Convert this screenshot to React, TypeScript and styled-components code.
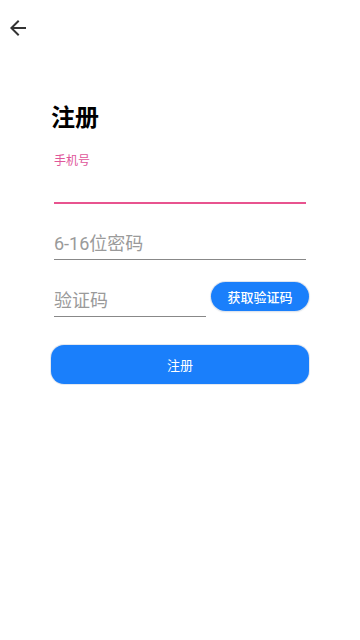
import styled, { createGlobalStyle } from "styled-components";
import { MdArrowBack } from "react-icons/md";

const GlobalStyle = createGlobalStyle`
  html, body {
    margin: 0;
    padding: 0;
    background: #fff;
  }
  body {
    font-family: Roboto, "Noto Sans CJK SC", "Noto Sans", sans-serif;
    -webkit-font-smoothing: antialiased;
  }
  * {
    box-sizing: border-box;
  }
`;

const App = () => {
  return (
    <Page>
      <GlobalStyle />
      <Header>
        <BackButton aria-label="返回">
          <MdArrowBack size={24} />
        </BackButton>
      </Header>
      <Form>
        <Title>注册</Title>
        <PhoneField>
          <FloatLabel>手机号</FloatLabel>
          <PhoneInput type="tel" />
        </PhoneField>
        <TextInput type="password" placeholder="6-16位密码" />
        <CodeRow>
          <TextInput placeholder="验证码" $width={152} $gap={0} />
          <CodeButton type="button">获取验证码</CodeButton>
        </CodeRow>
        <SubmitButton type="button">注册</SubmitButton>
      </Form>
    </Page>
  );
};

export default App;

const Page = styled.div`
  width: 360px;
  min-height: 640px;
  background: #fff;
`;

const Header = styled.div`
  height: 56px;
  display: flex;
  align-items: center;
  padding-left: 6px;
`;

const BackButton = styled.button`
  display: flex;
  padding: 0;
  border: none;
  background: none;
  color: #333;
  cursor: pointer;
`;

const Form = styled.div`
  display: flex;
  flex-direction: column;
  margin: 0 51px;
`;

const Title = styled.h1`
  margin: 46px 0 0;
  font-size: 24px;
  line-height: 32px;
  font-weight: 700;
  color: #000;
`;

const PhoneField = styled.label`
  display: flex;
  flex-direction: column;
  margin: 19px 3px 0;
  border-bottom: 2px solid #e8538f;
`;

const FloatLabel = styled.span`
  font-size: 12px;
  line-height: 16px;
  color: #e0569a;
`;

const PhoneInput = styled.input`
  height: 33px;
  border: none;
  outline: none;
  padding: 0;
  font-size: 18px;
  font-family: inherit;
  background: transparent;
`;

const TextInput = styled.input<{ $width?: number; $gap?: number }>`
  width: ${(p) => (p.$width ? `${p.$width}px` : "auto")};
  height: 33px;
  margin: ${(p) => (p.$gap ?? 23)}px 3px 0;
  padding: 0;
  border: none;
  border-bottom: 1px solid #888;
  outline: none;
  font-size: 18px;
  font-family: inherit;
  color: #333;
  background: transparent;

  &::placeholder {
    color: #9a9a9a;
  }
`;

const CodeRow = styled.div`
  display: flex;
  align-items: flex-start;
  justify-content: space-between;
  margin-top: 24px;
`;

const CodeButton = styled.button`
  width: 98px;
  height: 29px;
  margin-top: -2px;
  padding: 0;
  border: none;
  border-radius: 15px;
  background: #1a7ffb;
  color: #fff;
  font-size: 13px;
  font-weight: 500;
  font-family: inherit;
  box-shadow: 0 0 0 1px #dfe5ee, 0 1px 2px rgba(0, 0, 0, 0.12);
  cursor: pointer;
`;

const SubmitButton = styled.button`
  height: 39px;
  margin-top: 28px;
  border: none;
  border-radius: 13px;
  background: #1a7ffb;
  color: #fff;
  font-size: 13px;
  font-family: inherit;
  box-shadow: 0 0 0 1px #e3e8f0;
  cursor: pointer;
`;
